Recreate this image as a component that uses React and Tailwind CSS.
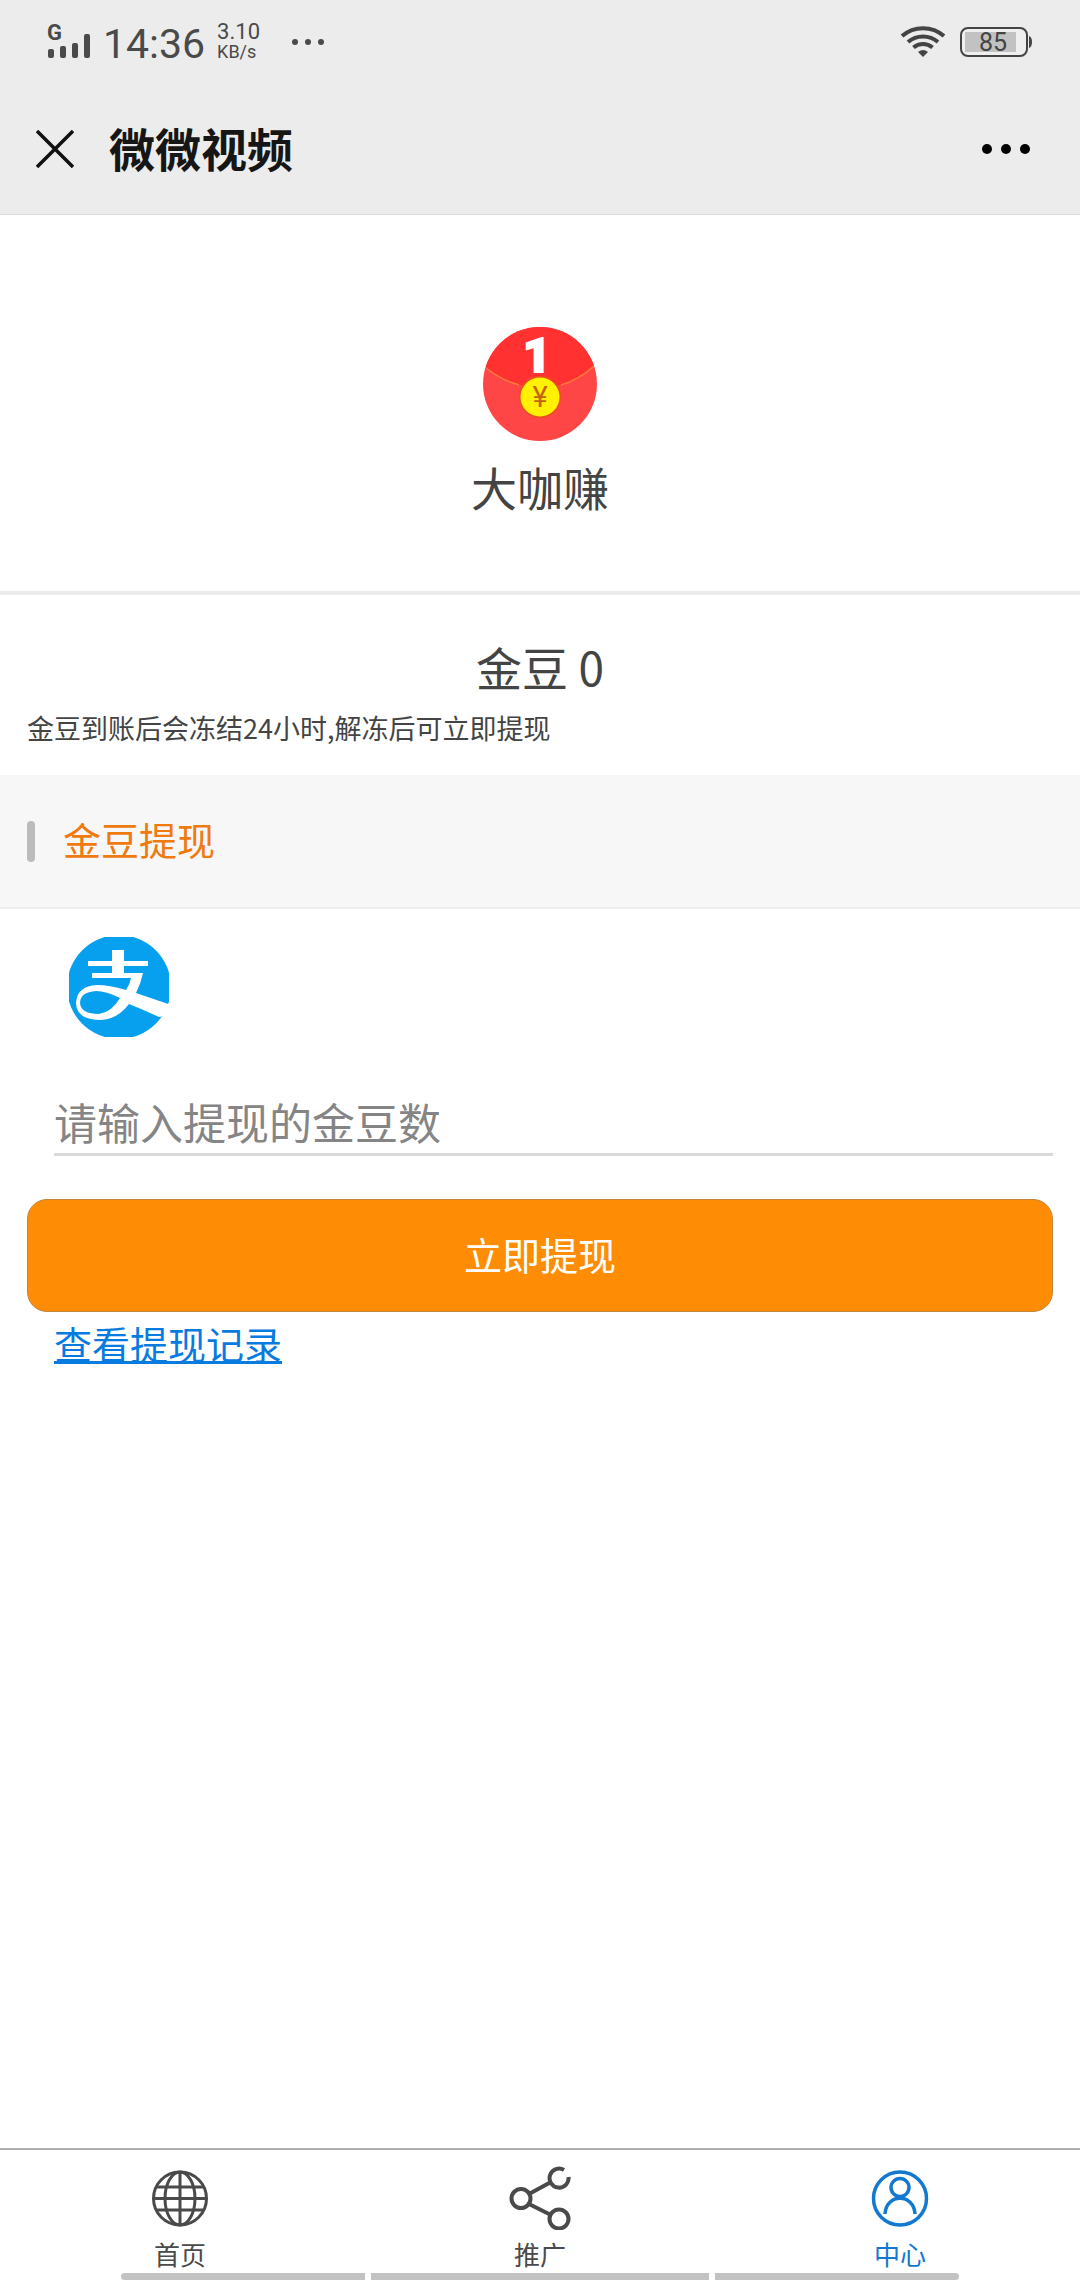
import { useState } from "react";

const SignalIcon = () => (
  <svg viewBox="0 -3 44 46" className="w-11 h-[46px]" fill="#4a4a4a">
    <text x="0" y="18" fontFamily="Roboto, sans-serif" fontSize="22" fontWeight="700">
      G
    </text>
    <rect x="1" y="27" width="6" height="9" rx="2" />
    <rect x="13" y="24" width="6" height="12" rx="2" />
    <rect x="25" y="21" width="6" height="15" rx="2" />
    <rect x="37" y="12" width="6" height="24" rx="2" />
  </svg>
);

const WifiIcon = () => (
  <svg viewBox="0 0 46 34" className="w-[46px] h-[34px]" fill="none" stroke="#444" strokeWidth="4">
    <path d="M2 11 A32 32 0 0 1 44 11" />
    <path d="M8 17 A23 23 0 0 1 38 17" />
    <path d="M13.500 22.500 A14.500 14.500 0 0 1 32.500 22.500" />
    <path d="M18 27 Q23 23 28 27 L23 32 Z" fill="#444" stroke="none" />
  </svg>
);

const BatteryIcon = () => (
  <svg viewBox="0 0 74 30" className="w-[74px] h-[30px]">
    <rect x="1" y="1" width="66" height="28" rx="7" fill="#efefef" stroke="#444" strokeWidth="2" />
    <rect x="5" y="5" width="51" height="20" fill="#c2c2c2" />
    <path d="M69 9 Q72 10 72 15 Q72 20 69 21 Z" fill="#444" />
    <text x="33" y="24" textAnchor="middle" fontFamily="Roboto, sans-serif" fontSize="25" fill="#444">
      85
    </text>
  </svg>
);

const PacketLogo = () => (
  <svg viewBox="0 0 114 114" className="w-[114px] h-[114px]">
    <clipPath id="packet">
      <circle cx="57" cy="57" r="57" />
    </clipPath>
    <g clipPath="url(#packet)">
      <rect width="114" height="114" fill="#ff4646" />
      <path d="M0 0 H114 V36 Q86 60 57 62 Q28 60 0 38 Z" fill="#ff3131" />
      <path d="M3 41 Q18 53 36 58 M78 58 Q96 53 111 39" fill="none" stroke="#ff7a3a" strokeWidth="1.500" />
    </g>
    <circle cx="57" cy="70" r="21" fill="#e8501e" />
    <circle cx="57" cy="70" r="19.500" fill="#fff100" />
    <text x="57" y="80" textAnchor="middle" fontFamily="Roboto, sans-serif" fontSize="29" fill="#c4640c">
      ¥
    </text>
    <text x="54" y="45" textAnchor="middle" fontFamily="Roboto, sans-serif" fontSize="48" fontWeight="900" fill="#fff" stroke="#fff" strokeWidth="2">
      1
    </text>
  </svg>
);

const AlipayLogo = () => (
  <svg viewBox="0 0 100 100" className="w-[100px] h-[100px]">
    <circle cx="50" cy="50" r="52" fill="#06a0ee" />
    <g fill="#fff">
      <rect x="43" y="13" width="12" height="25" />
      <rect x="19" y="24" width="60" height="5" />
      <path d="M23 36 H74 Q72 46 67 56 L102 68 L101 78 L90 80 Q75 73 60 67 Q48 83 30 83 Q7 82 7 66 Q8 49 28 48 Q40 48 57 53 Q61 47 62 41 H23 Z M51 61 Q37 54 27 54 Q11 55 11 66 Q12 77 30 77 Q43 75 51 61 Z" fillRule="evenodd" />
    </g>
  </svg>
);

const GlobeIcon = () => (
  <svg viewBox="0 0 64 64" className="w-16 h-16" fill="none" stroke="currentColor" strokeWidth="3">
    <circle cx="32" cy="32.500" r="26.500" />
    <ellipse cx="32" cy="32.500" rx="15" ry="26.500" />
    <path d="M32 6 V59 M6 32.500 H58 M8 21 H56 M8 44 H56" />
  </svg>
);

const ShareIcon = () => (
  <svg viewBox="0 0 64 64" className="w-16 h-16" fill="none" stroke="currentColor" strokeWidth="4">
    <circle cx="13" cy="32.500" r="9.500" />
    <circle cx="51" cy="53" r="9.500" />
    <path d="M56 4 A9.500 9.500 0 1 0 60.500 11" />
    <path d="M21 28 L43 16 M21 38 L43 49" />
  </svg>
);

const UserIcon = () => (
  <svg viewBox="0 0 64 64" className="w-16 h-16" fill="none" stroke="currentColor" strokeWidth="3.500">
    <circle cx="32" cy="32.500" r="26.500" />
    <circle cx="32" cy="21.500" r="9" />
    <path d="M17 48 C18 27 46 27 47 48" />
  </svg>
);

const tabs = [
  { name: "首页", icon: GlobeIcon },
  { name: "推广", icon: ShareIcon },
  { name: "中心", icon: UserIcon },
];

const App = () => {
  const [amount, setAmount] = useState("");
  const [activeTab, setActiveTab] = useState("中心");

  return (
    <div className="min-h-screen flex flex-col bg-white text-[#444] font-['Noto_Sans_CJK_SC',sans-serif]">
      <header className="bg-[#ececec] border-b border-[#dcdcdc]">
        {/* Status bar */}
        <div className="h-[84px] pl-[47px] pr-[46px] flex items-center justify-between font-[Roboto,sans-serif] text-[#4a4a4a]">
          <div className="flex items-center">
            <SignalIcon />
            <span className="ml-3 pt-1 text-[41px] leading-[48px]">14:36</span>
            <div className="ml-3 flex flex-col text-[18px] leading-5">
              <span className="text-[22px]">3.10</span>
              <span>KB/s</span>
            </div>
            <div className="ml-8 flex gap-[7px]">
              <span className="size-[6px] rounded-full bg-[#4a4a4a]" />
              <span className="size-[6px] rounded-full bg-[#4a4a4a]" />
              <span className="size-[6px] rounded-full bg-[#4a4a4a]" />
            </div>
          </div>
          <div className="flex items-center gap-[14px]">
            <WifiIcon />
            <BatteryIcon />
          </div>
        </div>

        {/* Title bar */}
        <div className="h-[130px] px-9 flex items-center text-[#161616]">
          <button aria-label="关闭">
            <svg viewBox="0 0 38 38" className="w-[38px] h-[38px]" stroke="#111" strokeWidth="3.500">
              <path d="M1 1 L37 37 M37 1 L1 37" />
            </svg>
          </button>
          <h1 className="ml-[35px] pb-1 text-[46px] leading-[60px] font-bold">微微视频</h1>
          <button aria-label="更多" className="ml-auto px-[14px] py-4 flex gap-[9px]">
            <span className="size-[10px] rounded-full bg-black" />
            <span className="size-[10px] rounded-full bg-black" />
            <span className="size-[10px] rounded-full bg-black" />
          </button>
        </div>
      </header>

      <main className="flex-1">
        <section className="pt-[112px] pb-[75px] flex flex-col items-center border-b-4 border-[#ebebeb]">
          <PacketLogo />
          <p className="mt-[15px] text-[46px] leading-[60px]">大咖赚</p>
        </section>

        <section className="px-[27px] pt-[41px] pb-[27px]">
          <p className="text-[46px] leading-[60px] text-center">金豆 0</p>
          <p className="mt-3 text-[27px] leading-10">
            金豆到账后会冻结24小时,解冻后可立即提现
          </p>
        </section>

        <div className="h-[134px] px-[27px] flex items-center gap-7 bg-[#f7f7f7] border-b-2 border-[#ededed]">
          <span className="w-2 h-[41px] rounded-full bg-[#bbb]" />
          <h2 className="pb-1 text-[38px] leading-[56px] text-[#ee7a10]">金豆提现</h2>
        </div>

        <form className="px-[27px] pt-7" onSubmit={(e) => e.preventDefault()}>
          <div className="pl-[42px]">
            <AlipayLogo />
          </div>
          <div className="mt-[52px] pl-[27px]">
            <input
              type="text"
              aria-label="提现的金豆数"
              placeholder="请输入提现的金豆数"
              value={amount}
              onChange={(e) => setAmount(e.target.value)}
              className="block w-full h-[67px] border-b-[3px] border-[#dadada] text-[43px] leading-[60px] placeholder:text-[#858585] outline-none"
            />
          </div>
          <button
            type="submit"
            className="mt-[43px] w-full h-[113px] pb-1 rounded-[20px] border border-[#c4863a] bg-[#ff8c05] text-white text-[38px] leading-[56px]"
          >
            立即提现
          </button>
          <a
            href="#"
            className="mt-[3px] ml-[27px] inline-block text-[38px] leading-[56px] text-[#087be0] underline decoration-[3px]"
          >
            查看提现记录
          </a>
        </form>
      </main>

      {/* Bottom tabs */}
      <nav className="border-t-2 border-[#b0b0b0]">
        <div className="pt-4 grid grid-cols-3">
          {tabs.map((tab) => (
            <button
              key={tab.name}
              onClick={() => setActiveTab(tab.name)}
              className={`flex flex-col items-center gap-[6px] text-[26px] leading-9 ${
                activeTab === tab.name ? "text-[#1278d0]" : "text-[#4a4a4a]"
              }`}
            >
              <tab.icon />
              {tab.name}
            </button>
          ))}
        </div>
        <div className="mt-px px-[121px] grid grid-cols-[244fr_338fr_244fr] gap-[6px]">
          <span className="h-[7px] rounded-l-full bg-[#c2c2c2]" />
          <span className="h-[7px] bg-[#c2c2c2]" />
          <span className="h-[7px] rounded-r-full bg-[#c2c2c2]" />
        </div>
      </nav>
    </div>
  );
};

export default App;
